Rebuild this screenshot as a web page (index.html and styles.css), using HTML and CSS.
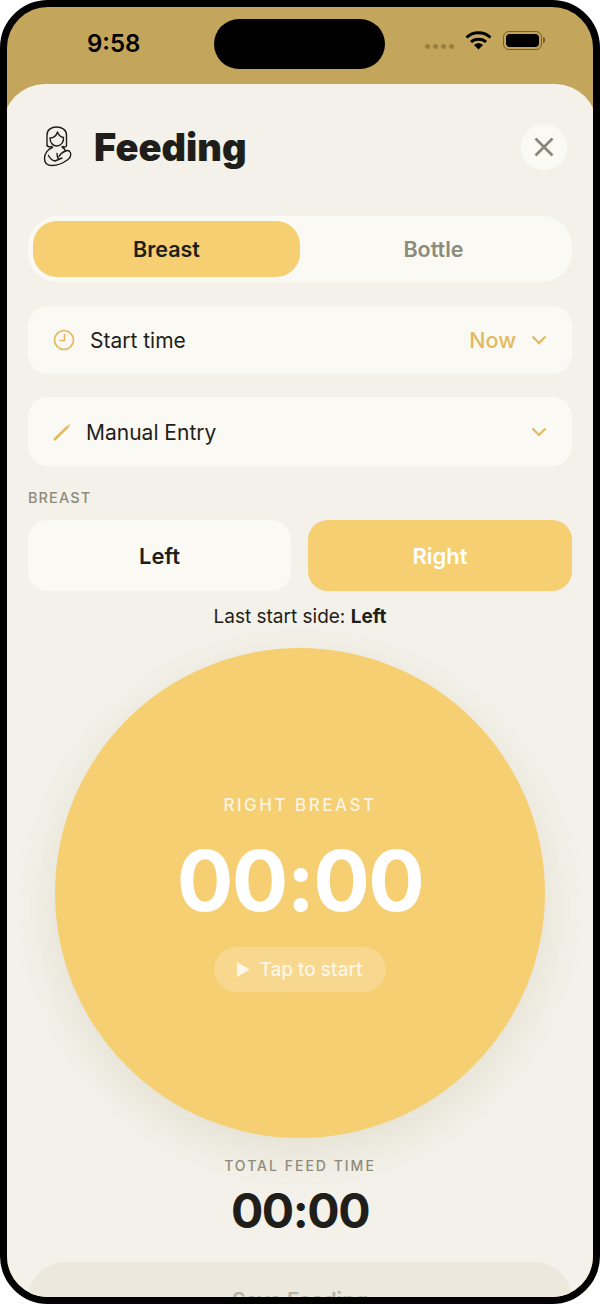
FILE: index.html
```html
<!DOCTYPE html>
<html lang="en">
<head>
    <meta charset="UTF-8">
    <meta name="viewport" content="width=device-width, initial-scale=1.0">
    <title>Feeding</title>
    <link rel="stylesheet" href="styles.css">
</head>
<body>
    <div class="phone">
        <div class="status-bar">
            <span class="clock">9:58</span>
            <div class="island"></div>
            <div class="status-icons">
                <div class="signal"><i></i><i></i><i></i><i></i></div>
                <svg class="wifi" width="27" height="20" viewBox="0 0 27 20">
                    <path d="M1.5 7.5C8 1.2 19 1.2 25.5 7.5" fill="none" stroke="#000" stroke-width="3"/>
                    <path d="M6 12C10 8.2 17 8.2 21 12" fill="none" stroke="#000" stroke-width="3"/>
                    <path d="M9 15L13.5 19.5L18 15C15.5 12.8 11.5 12.8 9 15Z" fill="#000"/>
                </svg>
                <div class="battery"><div class="battery-level"></div></div>
            </div>
        </div>

        <div class="sheet">
            <div class="sheet-header">
                <svg class="mother-icon" width="30" height="42" viewBox="0 0 30 42" fill="none" stroke="#1f1e1b" stroke-width="1.4" stroke-linecap="round" stroke-linejoin="round">
                    <path d="M4 19.500V9C4 4 8 1 13.500 1C19 1 23.500 4 23.500 9V19.500C23.500 21 21.500 21.500 19.500 20.500"/>
                    <path d="M4 19.500C5 21 7 21.200 9 20.500"/>
                    <path d="M7 12C10.500 12 13.500 9.500 14.500 6C15.500 9 17.500 11 20.500 11.500C21 16 18 20 13.800 20C9.800 20 7 16.500 7 12Z"/>
                    <path d="M9.500 21.500C5 23 1.500 27.500 1.500 32.500C1.500 37 4.500 39.500 9 39.500C14 39.500 21 36.500 25 33.500C28.500 31 28.500 26.500 26 25"/>
                    <path d="M19 21C21 22 22 23.500 22.500 25C24 24.300 25.300 24.300 26 25"/>
                    <path d="M5.500 29.500C7 32.500 9.500 34.500 12 35L19 32"/>
                    <path d="M14 27.500C14 29.500 14.500 31.500 15.500 33"/>
                    <path d="M22.500 25C20 26 17 28.500 16 30.500"/>
                </svg>
                <h1>Feeding</h1>
                <button class="close-btn">
                    <svg width="22" height="22" viewBox="0 0 22 22" fill="none" stroke="#86857a" stroke-width="2.600">
                        <path d="M2.500 2.500L19.500 19.500M19.500 2.500L2.500 19.500"/>
                    </svg>
                </button>
            </div>

            <div class="segment">
                <div class="segment-item active">Breast</div>
                <div class="segment-item">Bottle</div>
            </div>

            <div class="row row-time">
                <svg class="row-icon" width="22" height="22" viewBox="0 0 22 22" fill="none" stroke="#e3b95f" stroke-width="1.700">
                    <circle cx="11" cy="11" r="9.500"/>
                    <path d="M11.500 5V11.500H6.500"/>
                </svg>
                <span class="row-label">Start time</span>
                <span class="row-value">Now</span>
                <svg class="chevron" width="16" height="10" viewBox="0 0 16 10" fill="none" stroke="#e3b95f" stroke-width="2.200">
                    <path d="M1.500 1.500L8 8L14.500 1.500"/>
                </svg>
            </div>

            <div class="row row-manual">
                <svg class="row-icon" width="18" height="17" viewBox="0 0 18 17" fill="none">
                    <path d="M1 16L15 2.500" stroke="#e3b95f" stroke-width="2.600"/>
                    <path d="M15 2.500L17 .7" stroke="#edd193" stroke-width="2"/>
                </svg>
                <span class="row-label">Manual Entry</span>
                <svg class="chevron" width="16" height="10" viewBox="0 0 16 10" fill="none" stroke="#e3b95f" stroke-width="2.200">
                    <path d="M1.500 1.500L8 8L14.500 1.500"/>
                </svg>
            </div>

            <div class="section-label">BREAST</div>
            <div class="side-picker">
                <div class="side-btn">Left</div>
                <div class="side-btn active">Right</div>
            </div>
            <div class="last-side">Last start side: <b>Left</b></div>

            <div class="timer">
                <div class="timer-label">RIGHT BREAST</div>
                <div class="timer-value">00:00</div>
                <div class="timer-hint">
                    <svg width="13" height="15" viewBox="0 0 13 15"><path d="M0 0L13 7.500L0 15Z" fill="#fff" fill-opacity=".8"/></svg>
                    Tap to start
                </div>
            </div>

            <div class="total">
                <div class="total-label">TOTAL FEED TIME</div>
                <div class="total-value">00:00</div>
            </div>

            <button class="save-btn">Save Feeding</button>
        </div>
    </div>
</body>
</html>
```

FILE: styles.css
```css
:root {
    --sand: #f3f1e9;
    --card: #fbf9f3;
    --yellow: #f5cf72;
    --gold: #e3b95f;
    --ink: #1f1e1b;
    --muted: #8d8b7c;
}

* {
    box-sizing: border-box;
}

body {
    margin: 0;
    background: #fff;
    font-family: Inter, "Noto Sans", sans-serif;
    color: var(--ink);
}

.phone {
    width: 600px;
    height: 1304px;
    border: 7px solid #000;
    border-radius: 48px;
    background: #c4a55c;
    overflow: hidden;
}

.status-bar {
    height: 77px;
    display: flex;
    align-items: flex-start;
    padding-top: 12px;
}

.clock {
    width: 207px;
    padding-left: 80px;
    padding-top: 11px;
    font-size: 24px;
    font-weight: 600;
    line-height: 28px;
    color: #000;
}

.island {
    width: 171px;
    height: 50px;
    background: #000;
    border-radius: 25px;
}

.status-icons {
    display: flex;
    align-items: center;
    padding: 11px 0 0 40px;
}

.signal {
    display: flex;
    gap: 3px;
    margin-top: 13px;
}

.signal i {
    width: 5px;
    height: 5px;
    border-radius: 50%;
    background: #96803f;
}

.wifi {
    margin-left: 11px;
}

.battery {
    position: relative;
    width: 39px;
    height: 19px;
    margin-left: 11px;
    padding: 2px;
    border: 1px solid #73602f;
    border-radius: 6px;
}

.battery::after {
    content: "";
    position: absolute;
    right: -4px;
    top: 5px;
    width: 2px;
    height: 6px;
    border-radius: 0 2px 2px 0;
    background: #73602f;
}

.battery-level {
    height: 100%;
    border-radius: 4px;
    background: #000;
}

.sheet {
    height: 1300px;
    margin: 0 -4px;
    padding: 0 25px;
    background: var(--sand);
    border-radius: 42px 42px 0 0;
}

.sheet-header {
    display: flex;
    align-items: center;
    height: 126px;
    margin-bottom: 6px;
}

.mother-icon {
    margin-left: 15px;
}

h1 {
    margin: 0 0 0 21px;
    font-size: 38px;
    font-weight: 900;
    line-height: 44px;
}

.close-btn {
    margin: 0 5px 0 auto;
    width: 46px;
    height: 46px;
    padding: 0;
    border: none;
    border-radius: 50%;
    background: var(--card);
    display: flex;
    align-items: center;
    justify-content: center;
}

.segment {
    display: flex;
    height: 66px;
    padding: 5px;
    background: var(--card);
    border-radius: 30px;
}

.segment-item {
    flex: 1;
    display: flex;
    align-items: center;
    justify-content: center;
    border-radius: 24px;
    font-size: 21.500px;
    font-weight: 600;
    color: var(--muted);
}

.segment-item.active {
    background: var(--yellow);
    color: var(--ink);
}

.row {
    display: flex;
    align-items: center;
    background: var(--card);
    border-radius: 20px;
    font-size: 21px;
}

.row-time {
    height: 68px;
    margin-top: 24px;
    padding: 0 25px;
}

.row-manual {
    height: 69px;
    margin-top: 23px;
    padding: 1px 25px 0;
}

.row-label {
    margin-left: 15px;
    flex: 1;
}

.row-value {
    margin-right: 15px;
    font-size: 21.500px;
    font-weight: 500;
    color: var(--gold);
}

.section-label {
    margin-top: 23px;
    font-size: 14.500px;
    line-height: 17px;
    font-weight: 500;
    letter-spacing: 1.100px;
    color: var(--muted);
}

.side-picker {
    display: grid;
    grid-template-columns: 263px 264px;
    gap: 17px;
    margin-top: 14px;
}

.side-btn {
    height: 71px;
    display: flex;
    align-items: center;
    justify-content: center;
    background: var(--card);
    border-radius: 20px;
    font-size: 22px;
    font-weight: 600;
}

.side-btn.active {
    background: var(--yellow);
    color: #fff;
}

.last-side {
    margin-top: 14px;
    text-align: center;
    font-size: 19px;
    line-height: 24px;
}

.timer {
    width: 490px;
    height: 490px;
    margin: 19px auto 0;
    border-radius: 50%;
    background: var(--yellow);
    box-shadow: 0 14px 45px rgba(120, 100, 50, 0.12);
    display: flex;
    flex-direction: column;
    align-items: center;
    padding-top: 147px;
    color: #fff;
}

.timer-label {
    font-size: 17px;
    line-height: 21px;
    font-weight: 500;
    letter-spacing: 2.500px;
    opacity: 0.8;
}

.timer-value {
    margin-top: 15px;
    font-size: 84px;
    line-height: 100px;
    font-weight: 700;
    letter-spacing: -1.600px;
}

.timer-hint {
    margin-top: 16px;
    width: 172px;
    height: 45px;
    display: flex;
    align-items: center;
    justify-content: center;
    gap: 9px;
    border-radius: 23px;
    background: rgba(255, 255, 255, 0.2);
    font-size: 19px;
    font-weight: 500;
    color: rgba(255, 255, 255, 0.8);
}

.total {
    margin-top: 19px;
    text-align: center;
}

.total-label {
    font-size: 14px;
    line-height: 18px;
    font-weight: 500;
    letter-spacing: 2px;
    color: var(--muted);
}

.total-value {
    margin-top: 6px;
    font-size: 48px;
    line-height: 60px;
    font-weight: 700;
    letter-spacing: -1.500px;
}

.save-btn {
    display: block;
    width: 100%;
    height: 76px;
    margin-top: 21px;
    border: none;
    border-radius: 40px;
    background: #ece8dc;
    font-family: inherit;
    font-size: 21px;
    font-weight: 600;
    color: #b7b5ab;
}
```
